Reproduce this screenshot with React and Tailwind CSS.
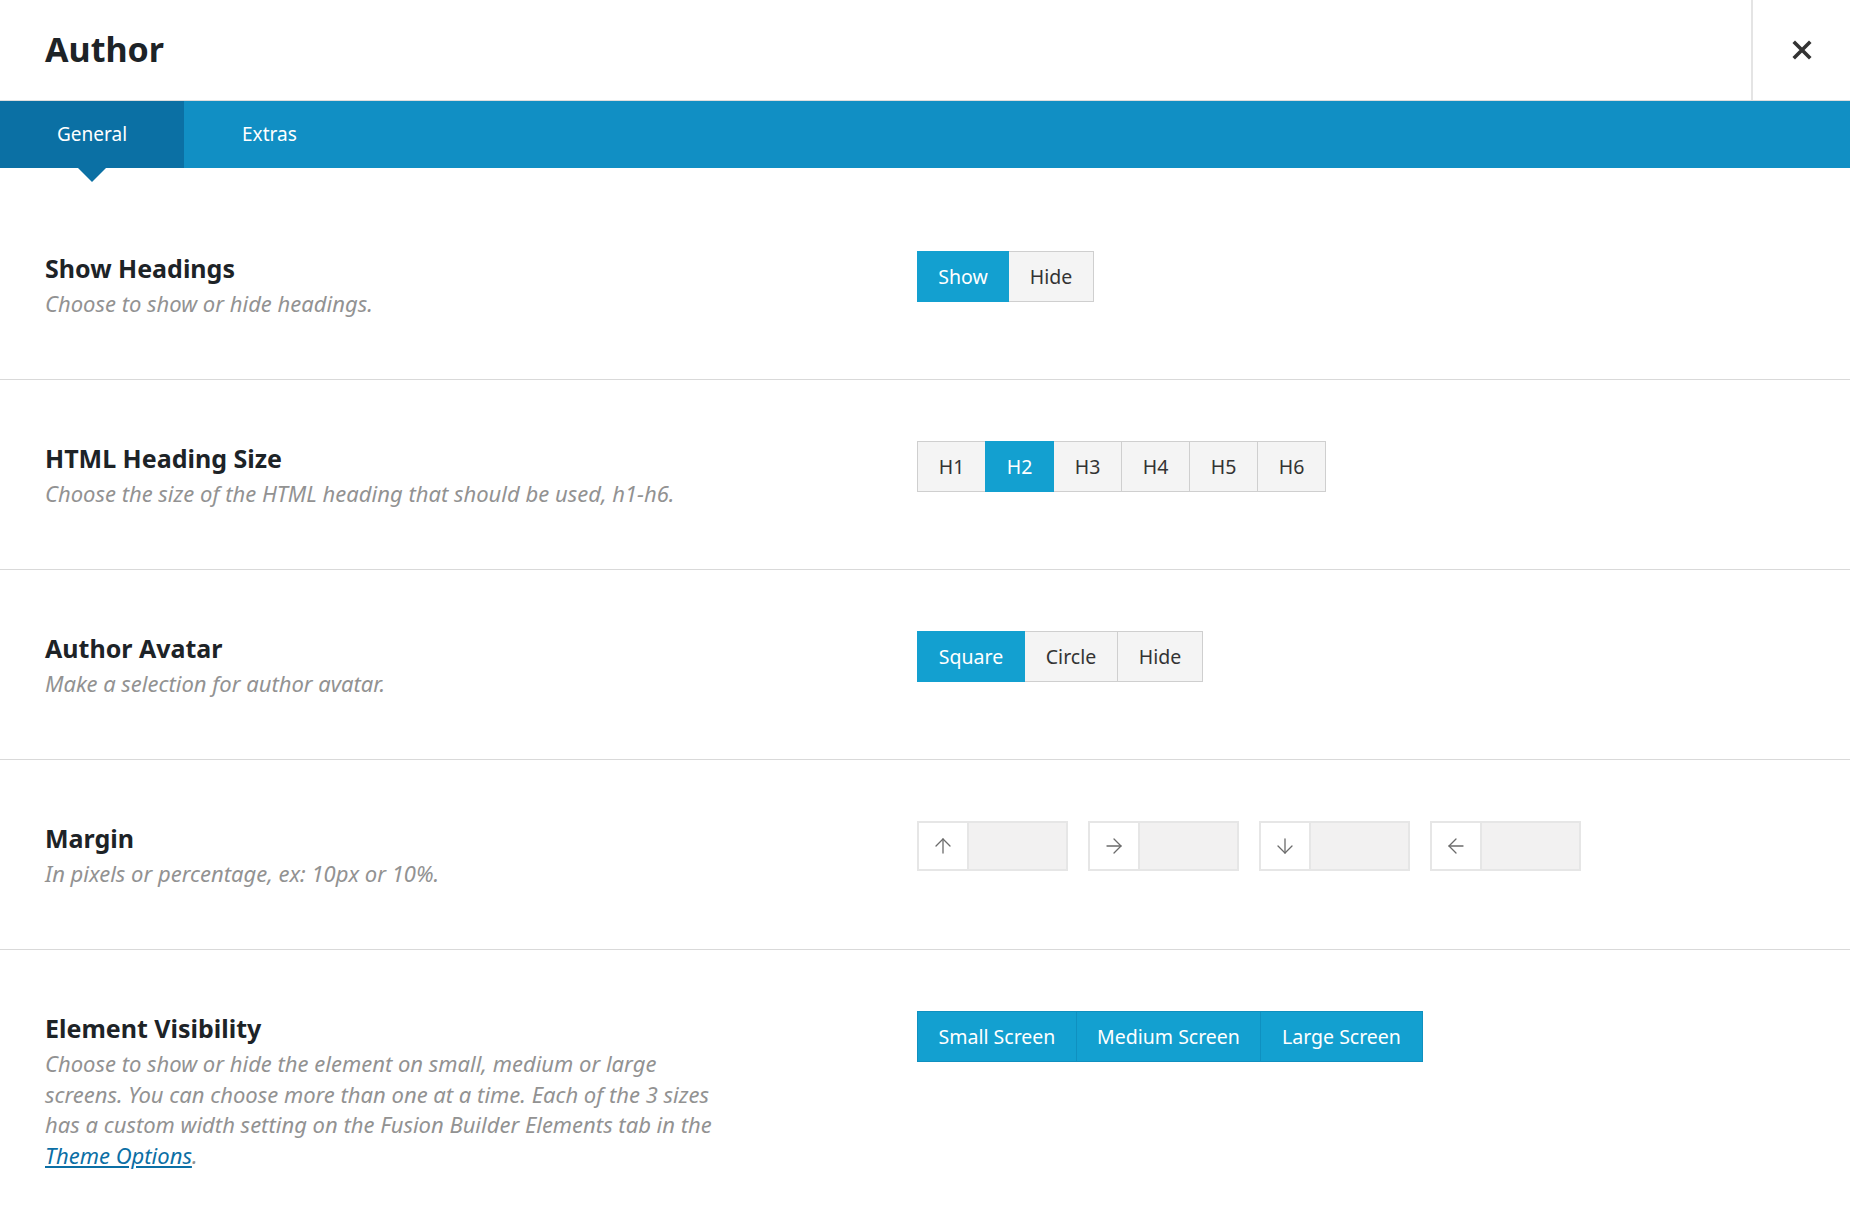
import { ArrowUp, ArrowRight, ArrowDown, ArrowLeft } from 'lucide-react';

const Segmented = ({ options, active, widths, allActive }) => (
    <div className="flex h-[51px]">
        {options.map((opt, i) => {
            const on = allActive || active === i;
            return (
                <div
                    key={opt}
                    style={{ width: widths[i] }}
                    className={`relative flex items-center justify-center border text-[19.5px] ${i > 0 ? '-ml-px' : ''} ${on
                        ? `bg-[#13a0d0] text-white ${allActive ? 'border-[#0f90c0]' : 'border-[#13a0d0] z-10'}`
                        : 'bg-[#f4f4f4] text-[#333] border-[#cfcfcf]'}`}
                >
                    {opt}
                </div>
            );
        })}
    </div>
);

const MarginField = ({ Icon }) => (
    <div className="flex h-[50px] w-[151px] border-2 border-[#e6e6e6]">
        <div className="flex w-[50px] items-center justify-center bg-white border-r-2 border-[#e6e6e6] text-[#6b6b6b]">
            <Icon size={24} strokeWidth={1.3} />
        </div>
        <div className="flex-1 bg-[#f2f1f1]" />
    </div>
);

const Section = ({ title, children, control, last }) => (
    <div className={`flex pt-[61px] ${last ? 'min-h-[277px]' : 'h-[190px] border-b border-[#d9d9d9]'}`}>
        <div className="w-[917px] shrink-0 pl-[45px] pt-[1px]">
            <h3 className="text-[25px] leading-[32px] font-bold text-[#1d2327] mb-[4px]">{title}</h3>
            <p className="text-[22px] leading-[30.5px] italic text-[#929292]">{children}</p>
        </div>
        <div className="flex">{control}</div>
    </div>
);

export default function App() {
    return (
        <div className="min-h-screen w-full bg-white font-['Noto_Sans','Open_Sans',sans-serif]">
            <header className="flex h-[101px] border-b border-[#dedede]">
                <h1 className="flex flex-1 items-center pl-[45px] pb-[2px] text-[34px] font-bold text-[#1d2327]">Author</h1>
                <button className="flex w-[99px] items-center justify-center border-l-2 border-[#e4e4e4] text-[#333]">
                    <svg width="20" height="20" viewBox="0 0 20 20">
                        <path d="M3 3 L17 17 M17 3 L3 17" stroke="currentColor" strokeWidth="3.6" strokeLinecap="square" />
                    </svg>
                </button>
            </header>

            <nav className="flex h-[67px] bg-[#118fc4] text-[19px] text-white">
                <div className="relative flex items-center bg-[#0b70a4] px-[57px]">
                    General
                    <span className="absolute left-1/2 top-full -translate-x-1/2 border-x-[14px] border-t-[14px] border-x-transparent border-t-[#0b70a4]" />
                </div>
                <div className="flex items-center px-[58px]">Extras</div>
            </nav>

            <main className="pt-[22px]">
                <Section
                    title="Show Headings"
                    control={<Segmented options={['Show', 'Hide']} active={0} widths={[92, 86]} />}
                >
                    Choose to show or hide headings.
                </Section>
                <Section
                    title="HTML Heading Size"
                    control={<Segmented options={['H1', 'H2', 'H3', 'H4', 'H5', 'H6']} active={1} widths={[69, 69, 69, 69, 69, 69]} />}
                >
                    Choose the size of the HTML heading that should be used, h1-h6.
                </Section>
                <Section
                    title="Author Avatar"
                    control={<Segmented options={['Square', 'Circle', 'Hide']} active={0} widths={[108, 94, 86]} />}
                >
                    Make a selection for author avatar.
                </Section>
                <Section
                    title="Margin"
                    control={
                        <div className="flex gap-[20px]">
                            <MarginField Icon={ArrowUp} />
                            <MarginField Icon={ArrowRight} />
                            <MarginField Icon={ArrowDown} />
                            <MarginField Icon={ArrowLeft} />
                        </div>
                    }
                >
                    In pixels or percentage, ex: 10px or 10%.
                </Section>
                <Section
                    last
                    title="Element Visibility"
                    control={<Segmented options={['Small Screen', 'Medium Screen', 'Large Screen']} allActive widths={[160, 185, 163]} />}
                >
                    Choose to show or hide the element on small, medium or large<br />
                    screens. You can choose more than one at a time. Each of the 3 sizes<br />
                    has a custom width setting on the Fusion Builder Elements tab in the<br />
                    <a href="#" className="text-[#0b6fa5] underline">Theme Options</a>.
                </Section>
            </main>
        </div>
    );
}
